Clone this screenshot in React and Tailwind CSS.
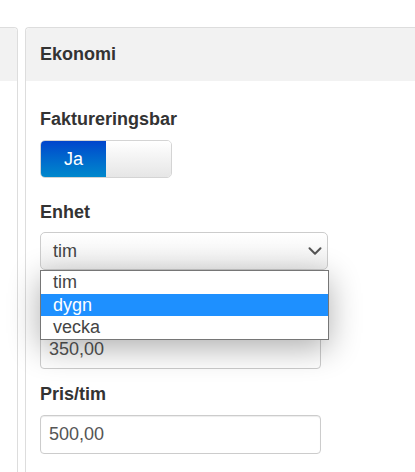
import { ChevronDown } from 'lucide-react';

// Panel form with an open native-style select dropdown
const Label = ({ children, className = '' }) => (
    <div className={`h-[20px] leading-[20px] text-[18px] font-bold text-[#333] ${className}`}>
        {children}
    </div>
);

const TextInput = ({ value, className = '' }) => (
    <div
        className={`w-[281px] h-[39px] border border-[#ccc] rounded-[4px] bg-white shadow-[inset_0_1px_1px_rgba(0,0,0,0.075)] flex items-center pl-[8px] text-[18px] text-[#555] ${className}`}
    >
        {value}
    </div>
);

const App = () => {
    const options = ['tim', 'dygn', 'vecka'];
    const selected = 'dygn';

    return (
        <div className="w-[415px] h-[472px] overflow-hidden bg-white font-['Liberation_Sans',Arial,sans-serif]">
            <div className="flex pt-[27px] h-full">
                {/* Left (cut off) panel */}
                <div className="w-[18px] shrink-0 border-t border-r border-[#ddd] rounded-tr-[4px]">
                    <div className="h-[53px] bg-[#f2f2f2] rounded-tr-[4px]" />
                </div>

                {/* Ekonomi panel */}
                <div className="ml-[7px] flex-1 border-t border-l border-[#ddd] rounded-tl-[4px]">
                    <div className="h-[53px] bg-[#f2f2f2] rounded-tl-[4px] px-[14px] flex items-center text-[18px] font-bold text-[#333]">
                        Ekonomi
                    </div>

                    <div className="px-[14px]">
                        <Label className="mt-[28px]">Faktureringsbar</Label>
                        <div className="mt-[11px] flex w-[132px] h-[38px] rounded-[5px] overflow-hidden border border-[#d4d4d4]">
                            <div className="w-[65px] bg-gradient-to-b from-[#0044cc] to-[#0088cc] text-white text-[18px] flex items-center justify-center">
                                Ja
                            </div>
                            <div className="flex-1 bg-gradient-to-b from-[#ffffff] to-[#e6e6e6]" />
                        </div>

                        <Label className="mt-[24px]">Enhet</Label>
                        <div className="relative mt-[10px] w-[288px] z-10">
                            <div className="h-[38px] border border-[#ccc] rounded-[5px] bg-gradient-to-b from-[#ffffff] to-[#f0f0f0] flex items-center justify-between pl-[12px] pr-[1px] text-[18px] text-[#444]">
                                <span>tim</span>
                                <ChevronDown size={22} strokeWidth={2.2} className="text-[#555]" />
                            </div>
                            <div className="absolute left-0 top-full w-[289px] bg-white border border-[#767676] shadow-[0_8px_32px_rgba(0,0,0,0.32)]">
                                {options.map((opt, i) => (
                                    <div
                                        key={opt}
                                        className={`${i === 1 ? 'h-[22px]' : 'h-[23px]'} flex items-center pl-[12px] text-[18px] ${
                                            opt === selected ? 'bg-[#1e90ff] text-white' : 'text-[#444]'
                                        }`}
                                    >
                                        {opt}
                                    </div>
                                ))}
                            </div>
                        </div>

                        {/* label of this field is hidden under the open list */}
                        <div className="mt-[30px] h-[20px]" />
                        <TextInput value="350,00" className="mt-[10px]" />

                        <Label className="mt-[15px]">Pris/tim</Label>
                        <TextInput value="500,00" className="mt-[11px]" />
                    </div>
                </div>
            </div>
        </div>
    );
};

export default App;
